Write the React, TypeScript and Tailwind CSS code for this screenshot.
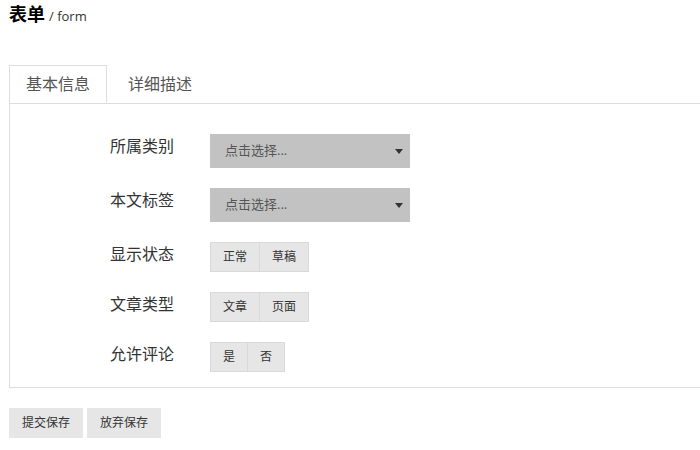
const font = "font-['Open_Sans','Noto_Sans_CJK_SC',sans-serif]";

interface SelectRowProps {
	label: string;
}

function SelectRow(props: SelectRowProps) {
	const { label } = props;
	return (
		<div className="flex items-start">
			<label className="w-[100px] text-[16px] leading-[24px] text-[#333]">{label}</label>
			<div className="flex h-[34px] w-[200px] items-center justify-between bg-[#c2c2c2] pl-[15px] pr-[7px] text-[13px] text-[#555]">
				<span>点击选择...</span>
				<span className="h-0 w-0 border-x-[4px] border-t-[5px] border-x-transparent border-t-[#333]" />
			</div>
		</div>
	);
}

interface GroupRowProps {
	label: string;
	options: string[];
}

function GroupRow(props: GroupRowProps) {
	const { label, options } = props;
	return (
		<div className="flex items-start">
			<label className="w-[100px] text-[16px] leading-[24px] text-[#333]">{label}</label>
			<div className="flex">
				{options.map((option, i) => (
					<button
						key={option}
						className={
							i === 0
								? "h-[30px] border border-[#d9d9d9] bg-[#e6e6e6] px-3 text-[12px] text-[#333]"
								: "h-[30px] border border-l-0 border-[#d9d9d9] bg-[#e6e6e6] px-3 text-[12px] text-[#333]"
						}
					>
						{option}
					</button>
				))}
			</div>
		</div>
	);
}

export default function App() {
	return (
		<div className={`h-[450px] w-[700px] overflow-hidden bg-white pl-[9px] ${font}`}>
			<div className="flex items-baseline gap-[4px] pt-[1px]">
				<h1 className="text-[18px] font-bold leading-[26px] text-black">表单</h1>
				<span className="text-[13px] text-[#333]">/ form</span>
			</div>

			<div className="mt-[38px] flex w-[720px] border-b border-[#ddd]">
				<div className="-mb-px flex h-[38px] items-center border border-b-white border-[#ddd] bg-white px-4 text-[16px] text-[#555]">
					基本信息
				</div>
				<div className="flex h-[38px] items-center px-[21px] text-[16px] text-[#555]">详细描述</div>
			</div>

			<div className="flex w-[720px] flex-col gap-5 border border-t-0 border-[#ddd] pb-[15px] pl-[100px] pt-[30px]">
				<SelectRow label="所属类别" />
				<SelectRow label="本文标签" />
				<GroupRow label="显示状态" options={["正常", "草稿"]} />
				<GroupRow label="文章类型" options={["文章", "页面"]} />
				<GroupRow label="允许评论" options={["是", "否"]} />
			</div>

			<div className="mt-5 flex gap-1">
				<button className="h-[30px] bg-[#e6e6e6] px-[13px] text-[12px] text-[#333]">提交保存</button>
				<button className="h-[30px] bg-[#e6e6e6] px-[13px] text-[12px] text-[#333]">放弃保存</button>
			</div>
		</div>
	);
}
